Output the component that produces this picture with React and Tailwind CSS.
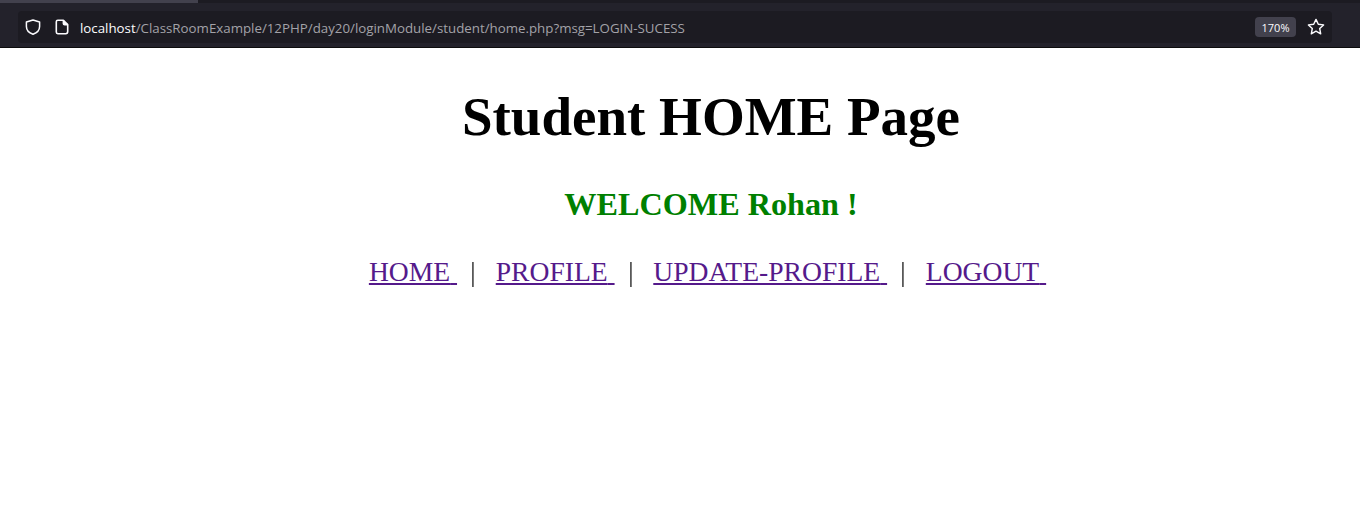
const links = ['HOME', 'PROFILE', 'UPDATE-PROFILE', 'LOGOUT'];

function ShieldIcon() {
  return (
    <svg width="16" height="16" viewBox="0 0 16 16" fill="none" stroke="#fbfbfe" strokeWidth="1.5" strokeLinejoin="round">
      <path d="M8 1 L14.6 3 V7.4 C14.6 11 12 13.8 8 15.2 C4 13.8 1.4 11 1.4 7.4 V3 Z" />
    </svg>
  );
}

function PageIcon() {
  return (
    <svg width="14" height="16" viewBox="0 0 14 16" fill="none" stroke="#fbfbfe" strokeWidth="1.6" strokeLinejoin="round">
      <path d="M2.8 1.3 H8.4 L12.7 5.6 V12.6 C12.7 13.8 11.9 14.7 10.7 14.7 H2.8 C1.9 14.7 1.3 14 1.3 13.1 V2.8 C1.3 1.9 1.9 1.3 2.8 1.3 Z" />
      <path d="M8.4 1.3 V4.4 C8.4 5.2 8.9 5.6 9.6 5.6 H12.7" fill="#fbfbfe" />
    </svg>
  );
}

function StarIcon() {
  return (
    <svg width="18" height="18" viewBox="0 0 18 18" fill="none" stroke="#fbfbfe" strokeWidth="1.4" strokeLinejoin="round">
      <path d="M9 1.4 L11.3 6.2 L16.6 6.9 L12.7 10.5 L13.7 15.8 L9 13.2 L4.3 15.8 L5.3 10.5 L1.4 6.9 L6.7 6.2 Z" />
    </svg>
  );
}

function BrowserBar() {
  return (
    <div className="h-[48px] bg-[#23222b] border-b border-[#0c0c0d] font-['Open_Sans',sans-serif]">
      <div className="h-[3px] bg-[#1c1b22]">
        <div className="h-[3px] w-[198px] bg-[#42414d]" />
      </div>
      <div className="pl-[18px] pr-[28px] pt-[8px]">
        <div className="h-[32px] rounded bg-[#1c1b22] flex items-center pl-[7px] pr-[7px]">
          <ShieldIcon />
          <div className="ml-[14px]"><PageIcon /></div>
          <div className="ml-[11px] pt-[4px] text-[13.3px] text-[#a3a2a8] whitespace-nowrap">
            <span className="text-[#fbfbfe]">localhost</span>
            /ClassRoomExample/12PHP/day20/loginModule/student/home.php?msg=LOGIN-SUCESS
          </div>
          <div className="ml-auto h-[20px] w-[41px] text-center rounded bg-[#42414d] text-[11px] leading-[21px] text-[#fbfbfe]">170%</div>
          <div className="ml-[11px] flex"><StarIcon /></div>
        </div>
      </div>
    </div>
  );
}

export default function App() {
  return (
    <div className="h-[518px] bg-white overflow-hidden font-['Liberation_Serif',serif] text-black">
      <BrowserBar />
      <div className="pl-[62px] text-center">
        <h1 className="text-[55px] font-bold leading-[62px] pt-[38px]">Student HOME Page</h1>
        <h3 className="text-[32.2px] font-bold leading-[36px] mt-[38px] text-[#008000]">WELCOME Rohan !</h3>
        <div className="text-[27.6px] leading-[31px] mt-[34px] pr-[7px] whitespace-pre">
          {links.map((name, i) => (
            <span key={name}>
              {i > 0 && <span className="inline-block [will-change:transform] text-[26.7px] text-[#222222]">{'\u00a0\u00a0|\u00a0\u00a0 '}</span>}
              <a href="#" className="text-[#551a8b] underline">{name}{'\u00a0'}</a>
            </span>
          ))}
        </div>
      </div>
    </div>
  );
}
